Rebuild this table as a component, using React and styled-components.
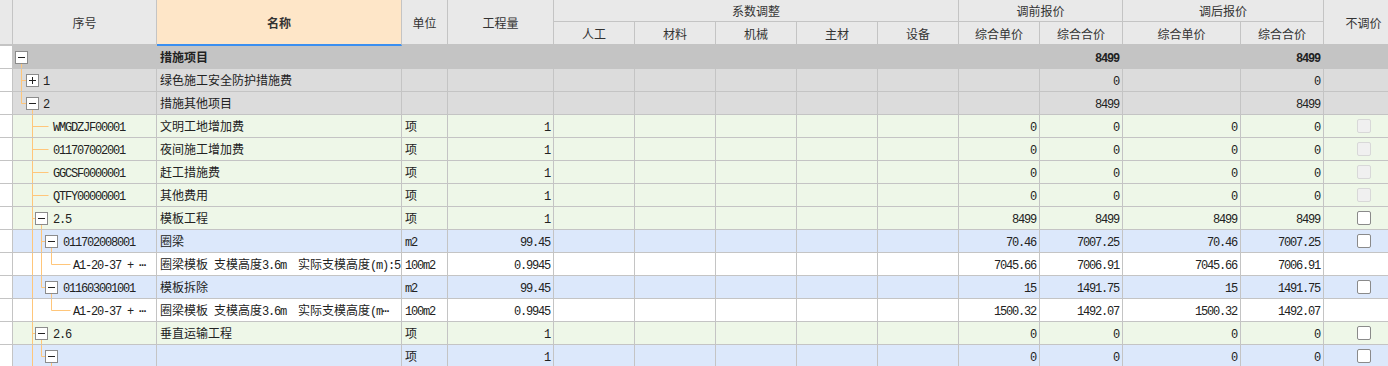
import React from 'react';
import styled, { createGlobalStyle } from 'styled-components';

const GlobalStyle = createGlobalStyle`
  body {
    margin: 0;
    background: #fff;
    overflow: hidden;
    font-family: "Noto Sans CJK SC", "Liberation Sans", sans-serif;
    font-size: 12px;
    color: #222;
  }
`;

const COLS = '13px 144px 245px 46px 106px 81px 81px 81px 81px 81px 81px 83px 118px 83px 80px';
const LINE = '#c4c4c4';
const TREE = '#ffc67a';

const ROW_BG = {
  top: '#c4c4c4',
  gray: '#dcdcdc',
  green: '#eef7e8',
  blue: '#dce8fb',
  white: '#ffffff',
};

const Wrap = styled.div`
  width: 1388px;
  height: 366px;
  overflow: hidden;
`;

const Table = styled.div`
  width: 1404px;
`;

const Head = styled.div`
  display: grid;
  grid-template-columns: ${COLS};
  grid-template-rows: 22px 24px;
  background: #e9e9e9;
  color: #333;
`;

const HeadCell = styled.div`
  box-sizing: border-box;
  display: flex;
  align-items: center;
  justify-content: center;
  border-right: 1px solid ${LINE};
  border-bottom: ${(p) => (p.$bottom ? '2px' : '1px')} solid ${(p) => (p.$active ? '#3b8ff0' : LINE)};
  background: ${(p) => (p.$active ? '#fee6c8' : 'transparent')};
  font-weight: ${(p) => (p.$active ? 700 : 400)};
  grid-column: ${(p) => p.$col || 'auto'};
  grid-row: ${(p) => p.$row || 'auto'};
  white-space: nowrap;
  overflow: hidden;
`;

const Row = styled.div`
  display: grid;
  grid-template-columns: ${COLS};
  height: 23px;
  background: ${(p) => ROW_BG[p.$tone]};
`;

const Cell = styled.div`
  box-sizing: border-box;
  border-right: 1px solid ${LINE};
  border-bottom: 1px solid ${LINE};
  padding: 0 3px;
  line-height: 22px;
  text-align: ${(p) => p.$align || 'left'};
  font-weight: ${(p) => (p.$bold ? 700 : 400)};
  white-space: pre;
  overflow: hidden;
`;

const Gutter = styled(Cell)`
  background: #fff;
  padding: 0;
`;

const TreeCell = styled(Cell)`
  display: flex;
  align-items: stretch;
  padding: 0;
  svg {
    flex-shrink: 0;
    display: block;
  }
`;

const CheckCell = styled(Cell)`
  display: flex;
  align-items: center;
  justify-content: center;
`;

const Check = styled.span`
  box-sizing: border-box;
  width: 14px;
  height: 14px;
  border-radius: 2px;
  border: 1px solid ${(p) => (p.$disabled ? '#d8d8d8' : '#8a8a8a')};
  background: ${(p) => (p.$disabled ? '#f0f0f0' : '#fff')};
`;

const Latin = styled.span`
  font-family: "Liberation Mono", "DejaVu Sans Mono", monospace;
  font-size: 12px;
  letter-spacing: -1.2px;
`;

// split text so that ascii runs get the narrow mono face (like SimSun half-width)
const Mixed = ({ text }) => {
  if (!text) return null;
  const parts = text.split(/([\x20-\x7E⋯]+)/).filter(Boolean);
  return parts.map((p, i) =>
    /^[\x20-\x7E⋯]+$/.test(p) ? <Latin key={i}>{p}</Latin> : <span key={i}>{p}</span>
  );
};

// tree guides, x in page coords
const TreeGuide = ({ g }) => {
  const off = 13;
  const w = g.text - off;
  const mid = 11.5;
  const X = (x) => x - off + 0.5;
  return (
    <svg width={w} height={22}>
      {(g.v || []).map((x) => (
        <line key={'v' + x} x1={X(x)} y1={0} x2={X(x)} y2={22} stroke={TREE} />
      ))}
      {(g.half || []).map((x) => (
        <line key={'h' + x} x1={X(x)} y1={0} x2={X(x)} y2={mid} stroke={TREE} />
      ))}
      {g.h && <line x1={X(g.h[0])} y1={mid} x2={X(g.h[1])} y2={mid} stroke={TREE} />}
      {g.down && <line x1={X(g.down)} y1={17} x2={X(g.down)} y2={22} stroke={TREE} />}
      {g.box && (
        <g>
          <rect x={X(g.box[0])} y={5.5} width={12} height={12} fill="#fff" stroke="#8c8c8c" />
          <line x1={X(g.box[0]) + 2.5} y1={mid} x2={X(g.box[0]) + 9.5} y2={mid} stroke="#222" />
          {g.box[1] === '+' && (
            <line x1={X(g.box[0]) + 6} y1={8} x2={X(g.box[0]) + 6} y2={15} stroke="#222" />
          )}
        </g>
      )}
    </svg>
  );
};

const rows = [
  { tone: 'top', g: { box: [15, '-'], down: 21, text: 30 }, no: '', name: '措施项目', bold: true, unit: '', qty: '', vals: ['', '8499', '', '8499'] },
  { tone: 'gray', g: { v: [21], h: [21, 26], box: [26, '+'], text: 43 }, no: '1', name: '绿色施工安全防护措施费', unit: '', qty: '', vals: ['', '0', '', '0'] },
  { tone: 'gray', g: { half: [21], h: [21, 26], box: [26, '-'], down: 32, text: 43 }, no: '2', name: '措施其他项目', unit: '', qty: '', vals: ['', '8499', '', '8499'] },
  { tone: 'green', g: { v: [32], h: [32, 48], text: 53 }, no: 'WMGDZJF00001', name: '文明工地增加费', unit: '项', qty: '1', vals: ['0', '0', '0', '0'], check: 'off' },
  { tone: 'green', g: { v: [32], h: [32, 48], text: 53 }, no: '011707002001', name: '夜间施工增加费', unit: '项', qty: '1', vals: ['0', '0', '0', '0'], check: 'off' },
  { tone: 'green', g: { v: [32], h: [32, 48], text: 53 }, no: 'GGCSF0000001', name: '赶工措施费', unit: '项', qty: '1', vals: ['0', '0', '0', '0'], check: 'off' },
  { tone: 'green', g: { v: [32], h: [32, 48], text: 53 }, no: 'QTFY00000001', name: '其他费用', unit: '项', qty: '1', vals: ['0', '0', '0', '0'], check: 'off' },
  { tone: 'green', g: { v: [32], h: [32, 35], box: [35, '-'], down: 41, text: 53 }, no: '2.5', name: '模板工程', unit: '项', qty: '1', vals: ['8499', '8499', '8499', '8499'], check: 'on' },
  { tone: 'blue', g: { v: [32, 41], h: [41, 45], box: [45, '-'], down: 51, text: 63 }, no: '011702008001', name: '圈梁', unit: 'm2', qty: '99.45', vals: ['70.46', '7007.25', '70.46', '7007.25'], check: 'on' },
  { tone: 'white', g: { v: [32, 41], half: [51], h: [51, 70], text: 73 }, no: 'A1-20-37 + ⋯', name: '圈梁模板 支模高度3.6m  实际支模高度(m):5', unit: '100m2', qty: '0.9945', vals: ['7045.66', '7006.91', '7045.66', '7006.91'] },
  { tone: 'blue', g: { v: [32], half: [41], h: [41, 45], box: [45, '-'], down: 51, text: 63 }, no: '011603001001', name: '模板拆除', unit: 'm2', qty: '99.45', vals: ['15', '1491.75', '15', '1491.75'], check: 'on' },
  { tone: 'white', g: { v: [32], half: [51], h: [51, 70], text: 73 }, no: 'A1-20-37 + ⋯', name: '圈梁模板 支模高度3.6m  实际支模高度(m⋯', unit: '100m2', qty: '0.9945', vals: ['1500.32', '1492.07', '1500.32', '1492.07'] },
  { tone: 'green', g: { v: [32], h: [32, 35], box: [35, '-'], down: 41, text: 53 }, no: '2.6', name: '垂直运输工程', unit: '项', qty: '1', vals: ['0', '0', '0', '0'], check: 'on' },
  { tone: 'blue', g: { v: [32], half: [41], h: [41, 45], box: [45, '-'], down: 51, text: 63 }, no: '', name: '', unit: '项', qty: '1', vals: ['0', '0', '0', '0'], check: 'on' },
];

const factorCols = ['人工', '材料', '机械', '主材', '设备'];

const App = () => {
  return (
    <Wrap>
      <GlobalStyle />
      <Table>
        <Head>
          <HeadCell $row="1 / 3" $bottom />
          <HeadCell $row="1 / 3" $bottom>序号</HeadCell>
          <HeadCell $row="1 / 3" $bottom $active>名称</HeadCell>
          <HeadCell $row="1 / 3" $bottom>单位</HeadCell>
          <HeadCell $row="1 / 3" $bottom>工程量</HeadCell>
          <HeadCell $col="6 / 11">系数调整</HeadCell>
          <HeadCell $col="11 / 13">调前报价</HeadCell>
          <HeadCell $col="13 / 15">调后报价</HeadCell>
          <HeadCell $row="1 / 3" $col="15 / 16" $bottom>不调价</HeadCell>
          {factorCols.map((t) => (
            <HeadCell key={t} $bottom>{t}</HeadCell>
          ))}
          <HeadCell $bottom>综合单价</HeadCell>
          <HeadCell $bottom>综合合价</HeadCell>
          <HeadCell $bottom>综合单价</HeadCell>
          <HeadCell $bottom>综合合价</HeadCell>
        </Head>
        {rows.map((r, idx) => (
          <Row key={idx} $tone={r.tone}>
            <Gutter />
            <TreeCell>
              <TreeGuide g={r.g} />
              <span><Mixed text={r.no} /></span>
            </TreeCell>
            <Cell $bold={r.bold}><Mixed text={r.name} /></Cell>
            <Cell><Mixed text={r.unit} /></Cell>
            <Cell $align="right"><Mixed text={r.qty} /></Cell>
            {factorCols.map((t) => (
              <Cell key={t} />
            ))}
            {r.vals.map((v, i) => (
              <Cell key={i} $align="right" $bold={r.bold}><Mixed text={v} /></Cell>
            ))}
            <CheckCell>
              {r.check && <Check $disabled={r.check === 'off'} />}
            </CheckCell>
          </Row>
        ))}
      </Table>
    </Wrap>
  );
};

export default App;
